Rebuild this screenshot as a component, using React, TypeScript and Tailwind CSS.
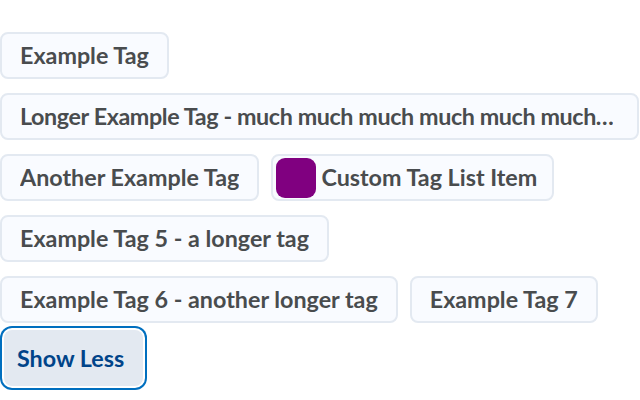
import React from "react";

const LONG_TAG =
  "Longer Example Tag - much much much much much much much much much much much much";

const tags = [
  "Example Tag",
  LONG_TAG,
  "Another Example Tag",
  "__custom__",
  "Example Tag 5 - a longer tag",
  "Example Tag 6 - another longer tag",
  "Example Tag 7",
];

// cut at the word, like the reference, rather than mid-word
const shorten = (text: string) =>
  text === LONG_TAG ? "Longer Example Tag - much much much much much much…" : text;

const Tag = ({ text }: { text: string }) => (
  <div
    title={text}
    className={
      text === LONG_TAG
        ? "flex h-[47px] w-[639px] items-center rounded-[8px] border-2 border-[#e3e9f1] bg-[#f9fbff] px-[18px] text-[23.3px] font-bold text-[#494c4e]"
        : "flex h-[47px] max-w-full items-center rounded-[8px] border-2 border-[#e3e9f1] bg-[#f9fbff] px-[18px] text-[23.3px] font-bold text-[#494c4e]"
    }
  >
    <span
      className={
        text === LONG_TAG
          ? "overflow-hidden whitespace-nowrap tracking-[-0.017em]"
          : "truncate"
      }
    >
      {shorten(text)}
    </span>
  </div>
);

export default function App() {
  return (
    <div
      className="w-[640px] h-[400px] overflow-hidden bg-white pt-[32px]"
      style={{ fontFamily: "Lato, sans-serif" }}
    >
      <div className="flex flex-wrap gap-x-[12px] gap-y-[14px]">
        {tags.map((t) =>
          t === "__custom__" ? (
            <div
              key={t}
              className="flex h-[47px] items-center gap-[5px] rounded-[8px] border-2 border-[#e3e9f1] bg-[#f9fbff] pl-[3px] pr-[15px] text-[23.3px] font-bold text-[#494c4e]"
            >
              <span className="h-[40px] w-[40px] rounded-[9px] bg-[#800080]" />
              <span>Custom Tag List Item</span>
            </div>
          ) : (
            <Tag key={t} text={t} />
          )
        )}
      </div>
      <div className="mt-[7px] pl-[4px]">
        <button className="h-[56px] rounded-[8px] bg-[#e3e9f1] pl-[13px] pr-[19px] text-[23.3px] font-bold text-[#004489] shadow-[0_0_0_2px_#fff,0_0_0_4px_#006fbf]">
          Show Less
        </button>
      </div>
    </div>
  );
}
